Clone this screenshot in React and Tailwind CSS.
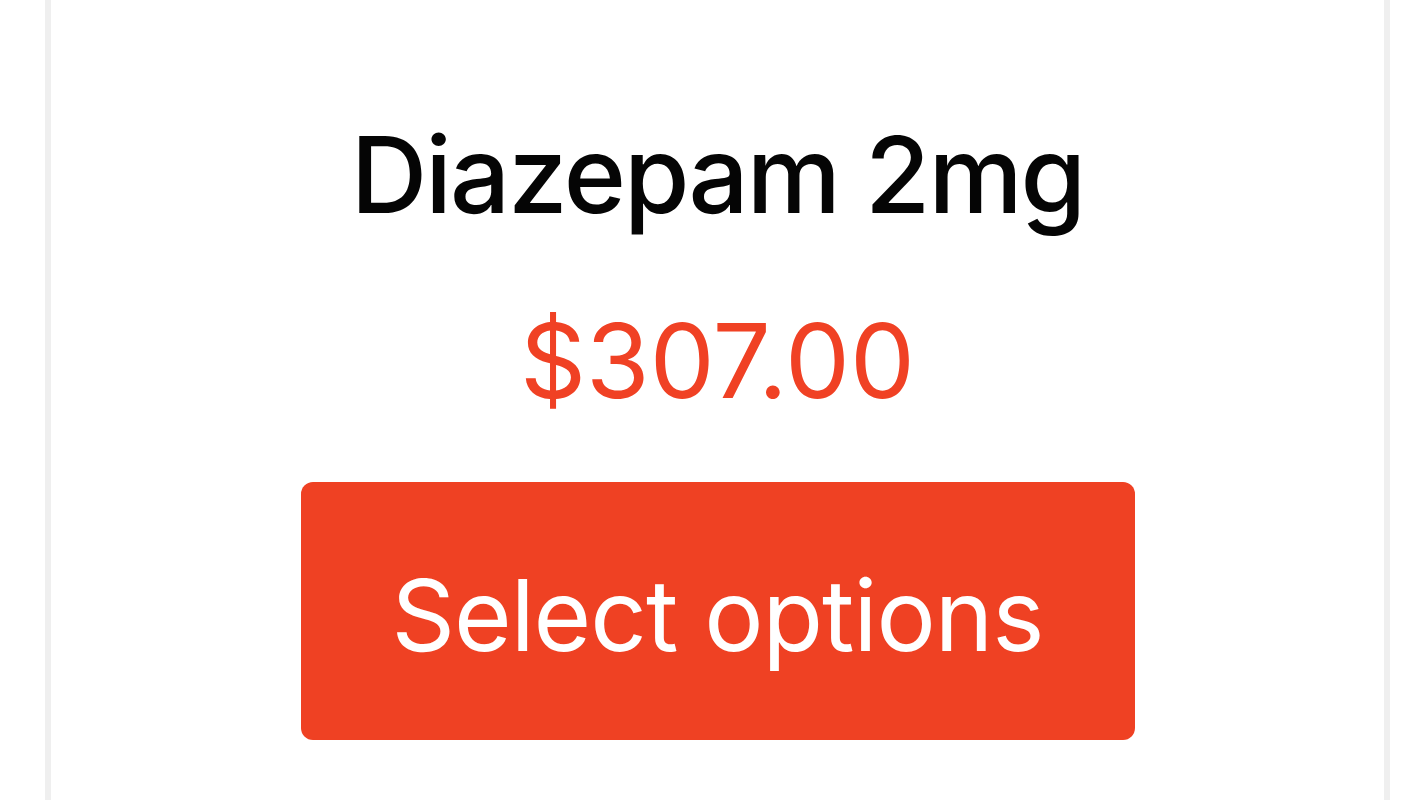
import React from 'react';

const product = {
  name: 'Diazepam 2mg',
  price: '$307.00',
};

const ProductCard = ({ name, price }) => {
  return (
    <div className="w-[1345px] h-[800px] bg-white border-x-[6px] border-[#efefef] flex flex-col items-center pt-[115px]">
      <h2 className="text-[106px] leading-[120px] font-medium text-[#050505] tracking-[-2px]">
        {name}
      </h2>
      <p className="mt-[71px] text-[103px] leading-[110px] text-[#f04124]">
        {price}
      </p>
      <button
        type="button"
        className="mt-[66px] w-[834px] h-[258px] rounded-[12px] bg-[#ef4123] text-white text-[99px] leading-[99px] tracking-[-1px] flex items-center justify-center pt-[8px]"
      >
        Select options
      </button>
    </div>
  );
};

const App = () => {
  return (
    <div
      className="min-h-screen bg-white pl-[45px]"
      style={{ fontFamily: 'Inter, "Liberation Sans", sans-serif' }}
    >
      <ProductCard {...product} />
    </div>
  );
};

export default App;
